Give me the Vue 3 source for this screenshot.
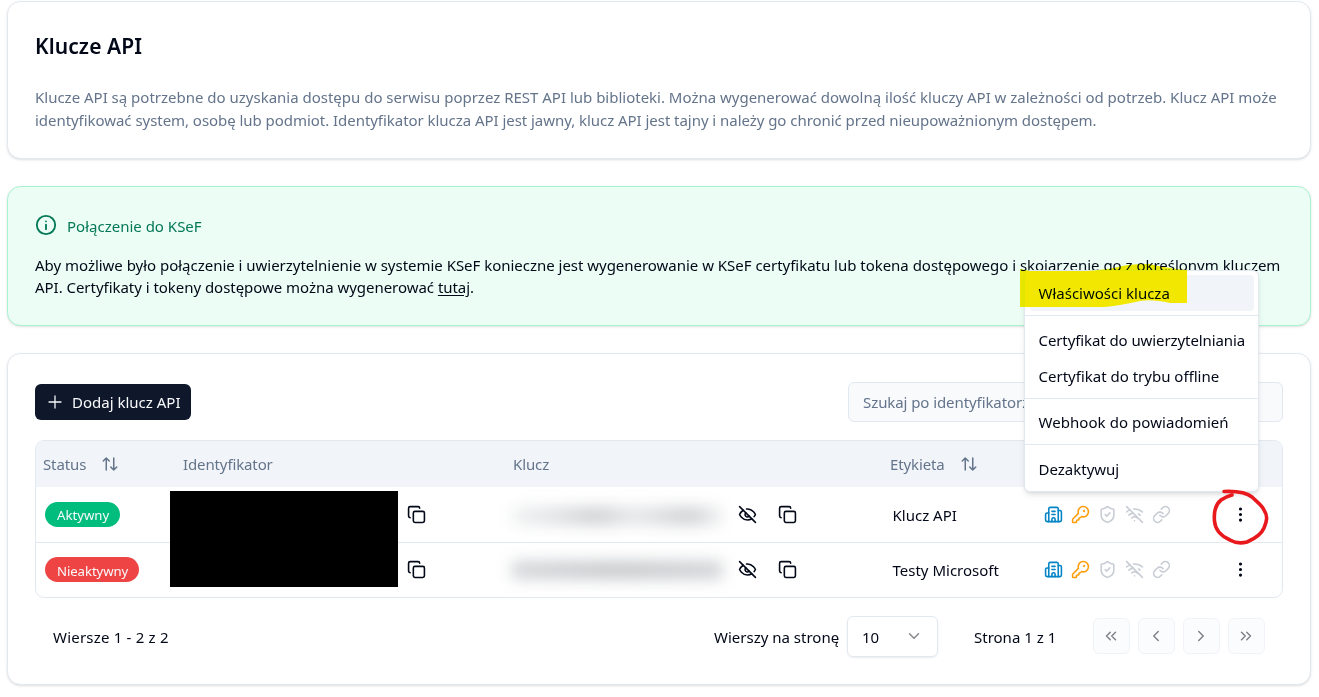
<script setup>
import {ref} from "vue";

const keys = ref([
  { id: 1, active: true, status: "Aktywny", label: "Klucz API" },
  { id: 2, active: false, status: "Nieaktywny", label: "Testy Microsoft" }
]);

// lucide outlines, 24x24 grid
const icons = {
  copy: '<rect width="14" height="14" x="8" y="8" rx="2" ry="2"/><path d="M4 16c-1.1 0-2-.9-2-2V4c0-1.1.9-2 2-2h10c1.1 0 2 .9 2 2"/>',
  eyeOff: '<path d="M9.88 9.88a3 3 0 1 0 4.24 4.24"/><path d="M10.73 5.08A10.43 10.43 0 0 1 12 5c7 0 10 7 10 7a13.16 13.16 0 0 1-1.67 2.68"/><path d="M6.61 6.61A13.526 13.526 0 0 0 2 12s3 7 10 7a9.74 9.74 0 0 0 5.39-1.61"/><path d="m2 2 20 20"/>',
  sort: '<path d="M7 4v16M3 8l4-4 4 4M17 4v16M13 16l4 4 4-4"/>',
  building: '<path d="M10 12h4M10 8h4"/><path d="M14 21v-3a2 2 0 0 0-4 0v3"/><path d="M6 10H4a2 2 0 0 0-2 2v7a2 2 0 0 0 2 2h16a2 2 0 0 0 2-2V9a2 2 0 0 0-2-2h-2"/><path d="M6 21V5a2 2 0 0 1 2-2h8a2 2 0 0 1 2 2v16"/>',
  key: '<path d="M2.586 17.414A2 2 0 0 0 2 18.828V21a1 1 0 0 0 1 1h3a1 1 0 0 0 1-1v-1a1 1 0 0 1 1-1h1a1 1 0 0 0 1-1v-1a1 1 0 0 1 1-1h.172a2 2 0 0 0 1.414-.586l.814-.814a6.5 6.5 0 1 0-4-4z"/><circle cx="16.5" cy="7.5" r=".5" fill="currentColor"/>',
  shield: '<path d="M20 13c0 5-3.5 7.5-7.66 8.95a1 1 0 0 1-.67-.01C7.5 20.5 4 18 4 13V6a1 1 0 0 1 1-1c2 0 4.5-1.2 6.24-2.72a1.17 1.17 0 0 1 1.52 0C14.51 3.81 17 5 19 5a1 1 0 0 1 1 1z"/><path d="m9 12 2 2 4-4"/>',
  wifiOff: '<path d="M12 20h.01"/><path d="M8.5 16.429a5 5 0 0 1 7 0"/><path d="M5 12.859a10 10 0 0 1 5.17-2.69"/><path d="M19 12.859a10 10 0 0 0-2.007-1.523"/><path d="M2 8.82a15 15 0 0 1 4.177-2.643"/><path d="M22 8.82a15 15 0 0 0-11.288-3.764"/><path d="m2 2 20 20"/>',
  link: '<path d="M10 13a5 5 0 0 0 7.54.54l3-3a5 5 0 0 0-7.07-7.07l-1.72 1.71"/><path d="M14 11a5 5 0 0 0-7.54-.54l-3 3a5 5 0 0 0 7.07 7.07l1.71-1.71"/>',
  dots: '<circle cx="12" cy="12" r="1"/><circle cx="12" cy="5" r="1"/><circle cx="12" cy="19" r="1"/>'
};

const pages = [
  "m11 17-5-5 5-5M18 17l-5-5 5-5",
  "m15 18-6-6 6-6",
  "m9 18 6-6-6-6",
  "m6 17 5-5-5-5M13 17l5-5-5-5"
];

const flags = ["building", "key", "shield", "wifiOff", "link"];
</script>

<template>
  <div class="page">
    <section class="card intro">
      <h1>Klucze API</h1>
      <p>
        Klucze API są potrzebne do uzyskania dostępu do serwisu poprzez REST API lub biblioteki. Można wygenerować dowolną ilość kluczy API w zależności od potrzeb. Klucz API może<br>
        <span class="second">identyfikować system, osobę lub podmiot. Identyfikator klucza API jest jawny, klucz API jest tajny i należy go chronić przed nieupoważnionym dostępem.</span>
      </p>
    </section>

    <section class="card notice">
      <div class="notice-title">
        <svg class="info" viewBox="0 0 24 24"><circle cx="12" cy="12" r="10"/><path d="M12 16.5v-5M12 8h.01"/></svg>
        <span>Połączenie do KSeF</span>
      </div>
      <p>
        Aby możliwe było połączenie i uwierzytelnienie w systemie KSeF konieczne jest wygenerowanie w KSeF certyfikatu lub tokena dostępowego i skojarzenie go z określonym kluczem<br>
        <span class="second">API. Certyfikaty i tokeny dostępowe można wygenerować <a>tutaj</a>.</span>
      </p>
    </section>

    <section class="card list">
      <div class="toolbar">
        <button class="add">
          <svg viewBox="0 0 24 24"><path d="M4 12h16M12 4v16"/></svg>
          <span>Dodaj klucz API</span>
        </button>
        <div class="search">Szukaj po identyfikatorze</div>
      </div>

      <div class="table">
        <div class="row head">
          <div class="c-status">Status <svg class="sort" viewBox="0 0 24 24" v-html="icons.sort"></svg></div>
          <div class="c-id">Identyfikator</div>
          <div class="c-key">Klucz</div>
          <div class="c-label">Etykieta <svg class="sort" viewBox="0 0 24 24" v-html="icons.sort"></svg></div>
        </div>
        <div v-for="k in keys" :key="k.id" class="row">
          <div class="c-status"><span class="badge" :class="{ off: !k.active }">{{ k.status }}</span></div>
          <div class="c-id"><svg class="icon" viewBox="0 0 24 24" v-html="icons.copy"></svg></div>
          <div class="c-key">
            <span class="hidden-key" :class="{ dense: !k.active }"></span>
            <svg class="icon" viewBox="0 0 24 24" v-html="icons.eyeOff"></svg>
            <svg class="icon" viewBox="0 0 24 24" v-html="icons.copy"></svg>
          </div>
          <div class="c-label">{{ k.label }}</div>
          <div class="c-flags">
            <svg v-for="f in flags" :key="f" class="icon" :class="f" viewBox="0 0 24 24" v-html="icons[f]"></svg>
          </div>
          <div class="c-more"><svg class="icon" viewBox="0 0 24 24" v-html="icons.dots"></svg></div>
        </div>
        <div class="redacted"></div>
      </div>

      <div class="footer">
        <span class="count">Wiersze 1 - 2 z 2</span>
        <span class="per">Wierszy na stronę</span>
        <div class="select">
          <span>10</span>
          <svg viewBox="0 0 24 24"><path d="m6 9 6 6 6-6"/></svg>
        </div>
        <span class="current">Strona 1 z 1</span>
        <div class="pager">
          <button v-for="p in pages" :key="p"><svg viewBox="0 0 24 24"><path :d="p"/></svg></button>
        </div>
      </div>
    </section>

    <div class="menu">
      <div class="item hover">Właściwości klucza</div>
      <hr>
      <div class="item long">Certyfikat do uwierzytelniania</div>
      <div class="item">Certyfikat do trybu offline</div>
      <hr>
      <div class="item wide">Webhook do powiadomień</div>
      <hr>
      <div class="item last">Dezaktywuj</div>
    </div>

    <svg class="marker" viewBox="0 0 1319 697">
      <path d="M1020 269 1030 271 1085 271Q1104 270 1118 267 1130 263.5 1150 264 1165 268 1187 270V303H1170Q1152 299 1140 301 1118 306 1104 307H1020Z"/>
    </svg>
    <svg class="pen" viewBox="0 0 1319 697">
      <path d="M1224 491.5C1237 491 1246 492 1252 497 1257 502 1262 505 1264 510 1268 516 1267 521 1264 528 1261 535 1254 539 1247 542 1241 543.5 1235 543 1230 540 1221 536 1215 529 1214.5 521 1213.5 510 1216 504 1221 500 1225 497 1228 496 1232 495"/>
    </svg>
  </div>
</template>

<style>
body {
  margin: 0;
  background: #fff;
}
</style>

<style scoped>
* {
  box-sizing: border-box;
}

.page {
  position: relative;
  height: 697px;
  padding: 1px 8px 0 7px;
  overflow: hidden;
  display: flex;
  flex-direction: column;
  gap: 27px;
  font: 15px/22.5px "Noto Sans", "Open Sans", sans-serif;
  color: #020817;
}

svg {
  fill: none;
  stroke: currentColor;
  stroke-width: 2;
  stroke-linecap: round;
  stroke-linejoin: round;
  flex: none;
}

p, h1 {
  margin: 0;
  white-space: nowrap;
}

.card {
  flex: none;
  border: 1px solid #e2e8f0;
  border-radius: 13.5px;
  padding: 27px;
  background: #fff;
  box-shadow: 0 1px 3px rgba(0, 0, 0, .1), 0 1px 2px -1px rgba(0, 0, 0, .1);
}

.intro {
  height: 158px;
  padding-top: 30px;
}

.intro h1 {
  font-size: 21px;
  line-height: 28px;
  font-weight: 600;
  letter-spacing: .1px;
}

.intro p {
  margin-top: 26px;
  color: #64748b;
  letter-spacing: -.006px;
}

.intro .second {
  letter-spacing: -.045px;
}

.notice {
  height: 140px;
  background: #ecfdf5;
  border-color: #a7f3d0;
}

.notice-title {
  display: flex;
  align-items: center;
  gap: 10px;
  color: #047857;
}

.info {
  width: 22px;
  height: 22px;
  margin-top: -2px;
}

.notice-title span {
  padding-top: 1px;
}

.notice p {
  margin-top: 16px;
  color: #020817;
  letter-spacing: -.022px;
}

.notice .second {
  letter-spacing: -.035px;
}

.notice a {
  text-decoration: underline;
  text-underline-offset: 2px;
}

.list {
  height: 332px;
  padding-top: 27px;
}

.toolbar {
  display: flex;
  align-items: center;
  justify-content: space-between;
  height: 41px;
}

button {
  font: inherit;
  padding: 0;
  border: 0;
}

.add {
  display: flex;
  align-items: center;
  gap: 8px;
  width: 156px;
  height: 36px;
  padding-left: 11px;
  border-radius: 6px;
  background: #0f172a;
  color: #f8fafc;
}

.add span {
  padding-top: 2px;
}

.add svg {
  width: 18px;
  height: 18px;
  stroke-width: 1.7;
}

.search {
  width: 435px;
  height: 40px;
  padding: 8px 14px;
  border: 1px solid #e2e8f0;
  border-radius: 6px;
  background: #f8fafc;
  color: #64748b;
  letter-spacing: -.08px;
}

.table {
  position: relative;
  margin-top: 18px;
  width: 1248px;
  height: 158px;
  border: 1px solid #e2e8f0;
  border-radius: 9px;
}

.row {
  display: flex;
  align-items: center;
  height: 55px;
}

.row + .row + .row {
  border-top: 1px solid #e2e8f0;
}

.row > div {
  display: flex;
  align-items: center;
}

.head {
  height: 46px;
  background: #f1f5f9;
  color: #64748b;
  border-radius: 8px 8px 0 0;
  letter-spacing: -.12px;
}

.c-status {
  width: 134px;
  padding-left: 9px;
}

.c-id {
  width: 342px;
  padding-left: 237px;
}

.c-key {
  width: 378px;
}

.c-label {
  width: 154px;
  padding-left: 2.5px;
}

.row .c-label {
  padding-top: 1px;
}

.c-flags {
  width: 187px;
  gap: 8px;
}

.head .c-status {
  padding-left: 7px;
  gap: 15px;
}

.head .c-id {
  padding-left: 13px;
}

.head .c-key {
  padding-left: 1px;
}

.head .c-label {
  padding: 0;
  gap: 15px;
}

.sort {
  width: 18px;
  height: 18px;
}

.icon {
  width: 19px;
  height: 19px;
  margin-top: -1px;
}

.badge {
  height: 25px;
  padding: 1px 11px 0 12px;
  border-radius: 13px;
  background: #00bc7d;
  color: #f8fafc;
  font-size: 13.2px;
  line-height: 25px;
}

.badge.off {
  margin-top: -2px;
  padding: 2px 11px 0 12px;
  background: #ef4444;
  letter-spacing: -.08px;
}

.hidden-key {
  width: 210px;
  height: 16px;
  margin: 2px 16px 0 0;
  background: linear-gradient(90deg, #eff0f1, #dddfe1 20%, #c7c9cc 40%, #e3e4e6 58%, #c7c9cc 85%, #eff0f1);
  filter: blur(8px);
}

.hidden-key.dense {
  margin-top: 0;
  background: linear-gradient(90deg, #cdd0d3, #bec1c4 50%, #cacdd0);
}

.c-key .icon + .icon {
  margin-left: 21px;
}

.c-flags .icon {
  color: #c8ccd4;
}

.c-flags .building {
  color: #0284c7;
}

.c-flags .key {
  color: #ff9d0a;
}

.redacted {
  position: absolute;
  left: 134px;
  top: 50px;
  width: 228px;
  height: 96px;
  background: #000;
}

.footer {
  display: flex;
  align-items: center;
  height: 42px;
  margin-top: 17px;
  padding: 0 18px;
}

.count {
  width: 661px;
  padding-top: 2px;
  letter-spacing: .2px;
}

.per {
  width: 133px;
  padding-top: 2px;
  white-space: nowrap;
}

.select {
  display: flex;
  align-items: center;
  justify-content: space-between;
  width: 91px;
  height: 41px;
  padding: 0 14px;
  border: 1px solid #e2e8f0;
  border-radius: 6px;
  box-shadow: 0 1px 2px rgba(0, 0, 0, .08);
}

.select span {
  padding-top: 2px;
}

.select svg {
  width: 18px;
  height: 18px;
  color: #85878d;
}

.current {
  box-sizing: content-box;
  width: 83px;
  padding: 2px 0 0 36px;
  white-space: nowrap;
}

.pager {
  display: flex;
  gap: 8px;
  margin: -1px 0 0 35.5px;
}

.pager button {
  display: flex;
  align-items: center;
  justify-content: center;
  width: 37px;
  height: 36px;
  padding-right: 1px;
  border: 1px solid #f0f3f7;
  border-radius: 6px;
  background: #fbfcfd;
  color: #808289;
}

.pager svg {
  width: 18px;
  height: 18px;
}

.menu {
  position: absolute;
  left: 1024px;
  top: 270px;
  width: 235px;
  height: 222px;
  padding: 4px 4.5px;
  border: 1px solid #e2e8f0;
  border-radius: 6px;
  background: #fff;
  box-shadow: 0 4px 6px -1px rgba(0, 0, 0, .1), 0 2px 4px -2px rgba(0, 0, 0, .1);
}

.item {
  height: 36px;
  padding: 8px 9px;
  border-radius: 4px;
  white-space: nowrap;
}

.item.hover {
  padding-top: 6.5px;
  background: #f1f5f9;
}

.item.long {
  letter-spacing: -.09px;
}

.item.wide {
  letter-spacing: .06px;
}

.item.last {
  padding-top: 9px;
}

.menu hr {
  height: 1px;
  margin: 4.5px -4.5px;
  border: 0;
  background: #e2e8f0;
}

.menu .hover + hr {
  margin: 4px -4.5px 5px;
}

.marker, .pen {
  position: absolute;
  left: 0;
  top: 0;
  width: 1319px;
  height: 697px;
  pointer-events: none;
}

.marker {
  mix-blend-mode: darken;
  fill: #f2e700;
  stroke: none;
}

.pen {
  color: #e8191c;
  stroke-width: 3.6;
}
</style>
